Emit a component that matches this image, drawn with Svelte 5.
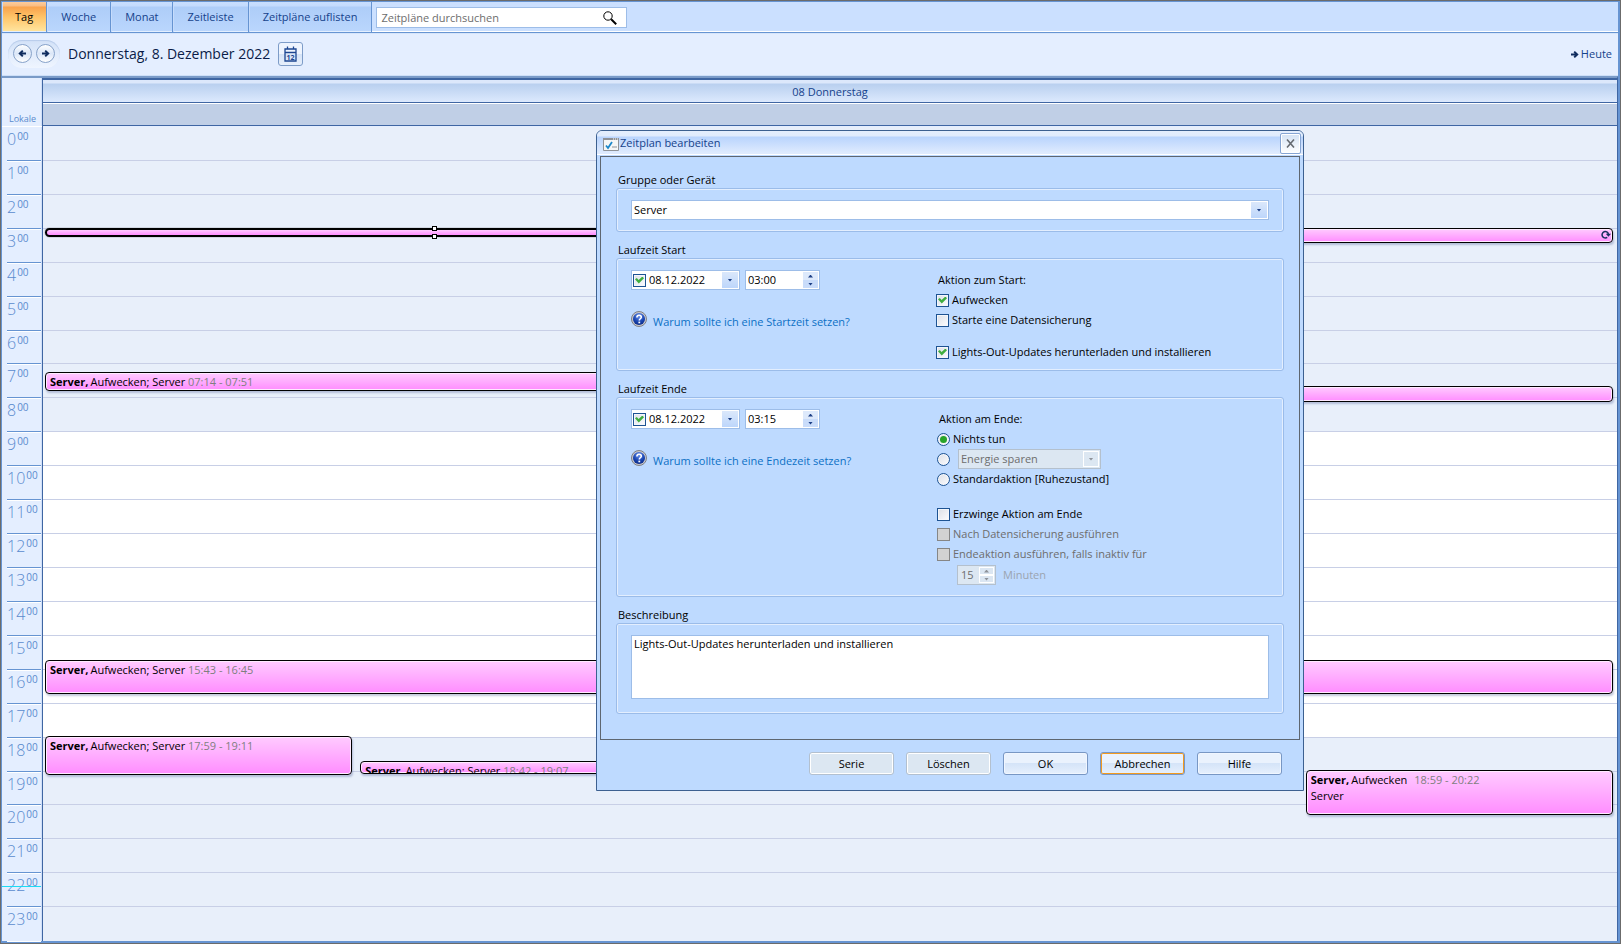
<script lang="ts">
	type CalendarEvent = {
		start: number;
		end: number;
		column: number;
		columns: number;
		title?: string;
		time?: string;
		detail?: string;
		selected?: boolean;
		recurring?: boolean;
	};

	const tabs = ['Tag', 'Woche', 'Monat', 'Zeitleiste', 'Zeitpläne auflisten'];
	const hours = Array.from({ length: 24 }, (_, i) => i);
	const now = 22 * 60 + 22;

	// start and end are minutes since midnight
	const events: CalendarEvent[] = [
		{ start: 178, end: 194, column: 0, columns: 2, selected: true },
		{ start: 179, end: 206, column: 1, columns: 2, recurring: true },
		{ start: 434, end: 467, column: 0, columns: 2, title: 'Aufwecken; Server', time: '07:14 - 07:51' },
		{ start: 459, end: 486, column: 1, columns: 2 },
		{ start: 943, end: 1003, column: 0, columns: 1, title: 'Aufwecken; Server', time: '15:43 - 16:45' },
		{ start: 1078, end: 1147, column: 0, columns: 5, title: 'Aufwecken; Server', time: '17:59 - 19:11' },
		{ start: 1122, end: 1145, column: 1, columns: 5, title: 'Aufwecken; Server', time: '18:42 - 19:07' },
		{ start: 1138, end: 1217, column: 4, columns: 5, title: 'Aufwecken', time: '18:59 - 20:22', detail: 'Server' },
	];

	let activeTab = $state('Tag');
	let search = $state('');
	let device = $state('Server');
	let startEnabled = $state(true);
	let startDate = $state('08.12.2022');
	let startTime = $state('03:00');
	let endEnabled = $state(true);
	let endDate = $state('08.12.2022');
	let endTime = $state('03:15');
	let wakeUp = $state(true);
	let backup = $state(false);
	let updates = $state(true);
	let endAction = $state('none');
	let force = $state(false);
	let description = $state('Lights-Out-Updates herunterladen und installieren');

	function place(event: CalendarEvent) {
		const top = (event.start / 1440) * 100;
		const height = ((event.end - event.start) / 1440) * 100;
		const left = (event.column / event.columns) * 100;
		return `top: ${top}%; height: ${height}%; left: ${left}%; width: ${100 / event.columns}%`;
	}
</script>

{#snippet arrow(flip: boolean)}
	<svg class="arrow" class:flip viewBox="0 0 9 9" aria-hidden="true">
		<path d="M1 4.5h6M4.2 1.6l3 2.9-3 2.9" fill="none" stroke="currentColor" stroke-width="2" />
	</svg>
{/snippet}

{#snippet spinner(disabled: boolean)}
	<span class="spin">
		<button type="button" aria-label="Erhöhen" {disabled}><i class="up"></i></button>
		<button type="button" aria-label="Verringern" {disabled}><i class="down"></i></button>
	</span>
{/snippet}

{#snippet help(text: string)}
	<a class="help" href="#hilfe">
		<svg viewBox="0 0 16 16" aria-hidden="true">
			<defs>
				<radialGradient id="help-fill" cx="50%" cy="25%" r="75%">
					<stop offset="0" stop-color="#6f95ec" />
					<stop offset="0.6" stop-color="#1c48b5" />
					<stop offset="1" stop-color="#0a2a86" />
				</radialGradient>
			</defs>
			<circle cx="8" cy="8" r="7.5" fill="#c9c9cc" stroke="#7d7f87" />
			<circle cx="8" cy="8" r="6" fill="url(#help-fill)" />
			<path d="M5.9 6.4c0-1.3.9-2.1 2.2-2.1s2.2.7 2.2 1.9c0 1.5-2 1.6-2 3.2" fill="none" stroke="#fff" stroke-width="1.6" />
			<path d="M7.4 10.6h1.8v1.7h-1.8z" fill="#fff" />
		</svg>
		<span>{text}</span>
	</a>
{/snippet}

<div class="app">
	<div class="frame">
		<nav class="tabs">
			{#each tabs as tab}
				<button type="button" class="tab" class:active={tab === activeTab} onclick={() => (activeTab = tab)}>{tab}</button>
			{/each}
			<label class="search">
				<input type="text" placeholder="Zeitpläne durchsuchen" aria-label="Zeitpläne durchsuchen" bind:value={search} />
				<svg viewBox="0 0 14 14" aria-hidden="true">
					<circle cx="5" cy="5" r="4.2" fill="none" stroke="#000" />
					<path d="M8.2 8.2l5 5" stroke="#000" stroke-width="2" />
				</svg>
			</label>
		</nav>

		<header class="toolbar">
			<div class="pager">
				<button type="button" aria-label="Zurück">{@render arrow(true)}</button>
				<button type="button" aria-label="Weiter">{@render arrow(false)}</button>
			</div>
			<h1>Donnerstag, 8. Dezember 2022</h1>
			<button type="button" class="pick" aria-label="Datum wählen">
				<svg viewBox="0 0 13 16" aria-hidden="true">
					<path d="M1 3h11v12H1zM1 6.5h11M3.5 0.5v3M9.5 0.5v3" fill="none" stroke="#1c4691" stroke-width="1.3" />
					<text x="6.5" y="13.5" text-anchor="middle">12</text>
				</svg>
			</button>
			<a class="today" href="#heute">{@render arrow(false)}Heute</a>
		</header>

		<main class="calendar">
			<div class="ruler">
				<div class="zone">Lokale</div>
				<div class="hours">
					{#each hours as hour}
						<div class="hour"><span>{hour}</span><sup>00</sup></div>
					{/each}
					<div class="now" style="top: {(now / 1440) * 100}%"></div>
				</div>
			</div>
			<div class="day">
				<div class="day-name">08 Donnerstag</div>
				<div class="all-day"></div>
				<div class="slots">
					{#each hours as hour}
						<div class="slot" class:working={hour >= 9 && hour < 18}></div>
					{/each}
					<div class="events">
						{#each events as event}
							<div class="place" style={place(event)}>
								<article class="event" class:selected={event.selected}>
									{#if event.title}
										<div class="text">
											<b>Server,</b>{event.title} <time class:spaced={event.detail}>{event.time}</time>
											{#if event.detail}<br />{event.detail}{/if}
										</div>
									{/if}
									{#if event.recurring}
										<svg class="recur" viewBox="0 0 10 9" aria-hidden="true">
											<path d="M6.2 7.3A3.2 3.2 0 1 1 7.4 4" fill="none" stroke="#17305f" stroke-width="1.5" />
											<path d="M4.8 3.8H10L7.4 6.8z" fill="#17305f" />
										</svg>
									{/if}
								</article>
								{#if event.selected}
									<i class="handle top"></i>
									<i class="handle bottom"></i>
								{/if}
							</div>
						{/each}
					</div>
				</div>
			</div>
		</main>
	</div>

	<form class="dialog" aria-label="Zeitplan bearbeiten" onsubmit={(e) => e.preventDefault()}>
		<div class="titlebar">
			<svg viewBox="0 0 16 13" aria-hidden="true">
				<path d="M.5.5h15v12H.5z" fill="#f6f6f6" stroke="#8f9296" />
				<path d="M0 0h16v2H0z" fill="#8f9296" />
				<path d="M10 .5h1v1h-1zM12 .5h1v1h-1zM14 .5h1v1h-1z" fill="#fff" />
				<path d="M3 7.5l2 2.5L9 4" fill="none" stroke="#1d87c9" stroke-width="1.8" />
				<path d="M9 9h5" stroke="#8f9296" />
			</svg>
			<h2>Zeitplan bearbeiten</h2>
			<button type="button" class="close" aria-label="Schließen">
				<svg viewBox="0 0 9 9" aria-hidden="true"><path d="M1 .5l7 8M8 .5l-7 8" stroke="#666b72" stroke-width="1.6" /></svg>
			</button>
		</div>

		<div class="panel">
			<fieldset>
				<legend>Gruppe oder Gerät</legend>
				<div class="box">
					<div class="combo wide">
						<select aria-label="Gruppe oder Gerät" bind:value={device}>
							<option>Server</option>
						</select>
						<span class="drop"><i class="down"></i></span>
					</div>
				</div>
			</fieldset>

			<fieldset>
				<legend>Laufzeit Start</legend>
				<div class="box split start">
					<div>
						<div class="row">
							<div class="field date">
								<input type="checkbox" aria-label="Startzeit aktiv" bind:checked={startEnabled} />
								<input type="text" aria-label="Startdatum" bind:value={startDate} />
								<button type="button" class="drop" aria-label="Kalender öffnen"><i class="down"></i></button>
							</div>
							<div class="field time">
								<input type="text" aria-label="Startzeit" bind:value={startTime} />
								{@render spinner(false)}
							</div>
						</div>
						{@render help('Warum sollte ich eine Startzeit setzen?')}
					</div>
					<div>
						<p>Aktion zum Start:</p>
						<label><input type="checkbox" bind:checked={wakeUp} />Aufwecken</label>
						<label><input type="checkbox" bind:checked={backup} />Starte eine Datensicherung</label>
						<label class="updates"><input type="checkbox" bind:checked={updates} />Lights-Out-Updates herunterladen und installieren</label>
					</div>
				</div>
			</fieldset>

			<fieldset>
				<legend>Laufzeit Ende</legend>
				<div class="box split end">
					<div>
						<div class="row">
							<div class="field date">
								<input type="checkbox" aria-label="Endezeit aktiv" bind:checked={endEnabled} />
								<input type="text" aria-label="Enddatum" bind:value={endDate} />
								<button type="button" class="drop" aria-label="Kalender öffnen"><i class="down"></i></button>
							</div>
							<div class="field time">
								<input type="text" aria-label="Endezeit" bind:value={endTime} />
								{@render spinner(false)}
							</div>
						</div>
						{@render help('Warum sollte ich eine Endezeit setzen?')}
					</div>
					<div>
						<p>Aktion am Ende:</p>
						<label><input type="radio" name="end" value="none" bind:group={endAction} />Nichts tun</label>
						<div class="option">
							<input type="radio" name="end" value="power" aria-label="Energie sparen" bind:group={endAction} />
							<div class="combo">
								<select aria-label="Energieaktion" disabled>
									<option>Energie sparen</option>
								</select>
								<span class="drop"><i class="down"></i></span>
							</div>
						</div>
						<label><input type="radio" name="end" value="default" bind:group={endAction} />Standardaktion [Ruhezustand]</label>
						<label class="force"><input type="checkbox" bind:checked={force} />Erzwinge Aktion am Ende</label>
						<label class="muted"><input type="checkbox" disabled />Nach Datensicherung ausführen</label>
						<label class="muted"><input type="checkbox" disabled />Endeaktion ausführen, falls inaktiv für</label>
						<label class="minutes">
							<span class="field off">
								<input type="text" value="15" disabled />
								{@render spinner(true)}
							</span>
							Minuten
						</label>
					</div>
				</div>
			</fieldset>

			<fieldset>
				<legend>Beschreibung</legend>
				<div class="box note">
					<textarea aria-label="Beschreibung" bind:value={description}></textarea>
				</div>
			</fieldset>
		</div>

		<footer>
			<button type="button" class="flat">Serie</button>
			<button type="button" class="flat">Löschen</button>
			<button type="submit">OK</button>
			<button type="button" class="focus">Abbrechen</button>
			<button type="button">Hilfe</button>
		</footer>
	</form>
</div>

<style>
	:global(body) {
		margin: 0;
	}

	.app,
	.app * {
		box-sizing: border-box;
	}

	.app {
		position: relative;

		display: flex;
		min-height: 100vh;

		border: 1px solid #6b6b6b;

		font: 11px/16px "Open Sans", "Noto Sans", sans-serif;
		color: #000;
	}

	.frame {
		flex: 1;
		display: flex;
		flex-direction: column;

		border: 1px solid #6694d2;
		border-width: 1px 2px 2px 1px;
		background: #e4eeff;
	}

	button,
	input,
	select,
	textarea {
		margin: 0;
		padding: 0;
		border: 0;
		border-radius: 0;
		outline: none;
		background: none;

		color: inherit;
		font: inherit;
	}

	svg {
		display: block;
		flex: none;
	}

	h1,
	h2,
	p {
		margin: 0;
		font-weight: 400;
	}

	h2 {
		font-size: 11px;
	}

	/* tabs */
	.tabs {
		display: flex;
		height: 31px;

		border-bottom: 1px solid #6694d2;
		background: #cbe0ff;
		box-shadow: inset 0 -1px #fff;
	}

	.tab {
		padding: 0 14px 1px;

		border-right: 1px solid #6694d2;
		background: linear-gradient(#c8defe 0, #c4dbfd 4px, #aecdf8 5px, #bad6fd 29px);
		box-shadow: inset 1px 0 #c6dcfc, inset 0 -1px #e3efff;

		color: #15428b;
	}

	.tab.active {
		padding: 0 13px 1px;

		background: linear-gradient(#fbcb9c 0, #f9bd83 4px, #f8a24c 5px, #ffc468 15px, #ffe29a 28px);
		color: #000;
	}

	.search {
		display: flex;
		align-items: center;
		width: 251px;
		margin: 5px 4px 4px;
		padding: 0 9px 0 4px;

		border: 1px solid #9dbde8;
		background: #fff;
	}

	.search input {
		flex: 1;
		min-width: 0;
	}

	.search input::placeholder {
		color: #6d6d6d;
		opacity: 1;
	}

	.search svg {
		width: 14px;
		height: 14px;
	}

	/* date bar */
	.toolbar {
		display: flex;
		align-items: center;
		height: 43px;
		padding: 0 6px 2px;

		border-top: 1px solid #d6e5fb;
		box-shadow: inset 0 -1px #cddff8;
	}

	.pager {
		display: flex;
		gap: 4px;
		padding: 4px 5px 5px;

		border-radius: 14px;
		background: linear-gradient(#d3e2f8, #eff5ff);
		box-shadow: inset 0 1px 1px #b7cbea;
	}

	.pager button {
		display: grid;
		place-items: center;
		width: 19px;
		height: 19px;

		border: 1px solid #87a2c9;
		border-radius: 50%;
		background: linear-gradient(#fff, #dbe7f8 50%, #fff);
	}

	.arrow {
		width: 9px;
		height: 9px;
		color: #0f2c5e;
	}

	.arrow.flip {
		transform: scaleX(-1);
	}

	h1 {
		margin: 0 8px;

		color: #0a1c48;
		font-size: 14px;
	}

	.pick {
		display: grid;
		place-items: center;
		width: 25px;
		height: 24px;

		border: 1px solid #7d9cc8;
		border-radius: 3px;
		background: linear-gradient(#eef4fe 50%, #d5e3f7 50%, #e6effc);
	}

	.pick svg {
		width: 13px;
		height: 16px;
	}

	.pick text {
		fill: #1c4691;
		font-size: 7px;
		font-weight: 700;
	}

	.today {
		display: flex;
		align-items: center;
		gap: 2px;
		margin-left: auto;

		color: #15428b;
		text-decoration: none;
	}

	/* calendar */
	.calendar {
		flex: 1;
		display: flex;

		border-top: 2px solid #7a9bc8;
		border-right: 1px solid #3f66a3;
	}

	.ruler {
		display: flex;
		flex-direction: column;
		width: 41px;

		border-right: 1px solid #3f66a3;
		box-shadow: inset -1px 0 #d0e0f9;

		color: #5a8bce;
	}

	.zone {
		height: 49px;
		padding: 33px 7px 0;

		border-bottom: 1px solid #fff;

		font-size: 9px;
		line-height: 15px;
	}

	.hours,
	.slots {
		position: relative;

		flex: 1;
		display: flex;
		flex-direction: column;
	}

	.slots {
		margin-top: 1px;
	}

	.hour {
		flex: 1;
		display: flex;
		margin: 0 1px 0 5px;

		border-bottom: 1px solid #6694d2;
		box-shadow: 0 1px #fff;

		font-size: 16px;
		font-weight: 300;
		line-height: 24px;
	}

	.hour:nth-child(24) {
		border-color: transparent;
	}

	.hour sup {
		margin-left: 1px;

		font-size: 10px;
		font-weight: 400;
		line-height: 18px;
		vertical-align: baseline;
	}

	.now {
		position: absolute;
		left: 0;
		right: 1px;

		height: 1px;
		background: #1bdcf5;
	}

	.day {
		flex: 1;
		display: flex;
		flex-direction: column;

		border-top: 2px solid #3f66a3;
	}

	.day-name {
		height: 23px;

		border-bottom: 1px solid #3f66a3;
		background: linear-gradient(#dce8fb 0, #dce8fb 3px, #b9d0ef 4px, #dce9fd 22px);

		color: #15428b;
		line-height: 23px;
		text-align: center;
	}

	.all-day {
		height: 23px;

		border-top: 1px solid #fff;
		border-bottom: 1px solid #3f66a3;
		background: #c0cfe6;
	}

	.slot {
		flex: 1;

		border-bottom: 1px solid #c8cfe6;
		background: #e8effa;
	}

	.slot.working {
		background: #fff;
	}

	.slot:nth-child(24) {
		border-color: transparent;
	}

	.events {
		position: absolute;
		inset: 0 -2px 0 0;
	}

	.place {
		position: absolute;
		padding: 0 6px 0 2px;
	}

	.event {
		height: 100%;
		overflow: hidden;
		padding: 1px 1px 0 4px;

		border: 1px solid #000;
		border-radius: 4px;
		background: linear-gradient(#ffcbff, #ff8dff);
		box-shadow: inset 0 0 0 1px #ffeaff, 1px 2px 2px rgba(60, 80, 140, .3);
	}

	.event.selected {
		border: 2px solid #000;
		border-radius: 5px;
		box-shadow: 0 0 1px #000;
	}

	.text {
		overflow: hidden;
		max-height: 100%;
	}

	.text b {
		margin-right: 2px;
	}

	.event time {
		color: #7f7f7f;
	}

	.event time.spaced {
		margin-left: 4px;
	}

	.recur {
		width: 10px;
		height: 9px;
		margin-left: auto;
	}

	.handle {
		position: absolute;
		left: calc(50% - 5px);

		width: 5px;
		height: 5px;

		border: 1px solid #000;
		background: #fff;
	}

	.handle.top {
		top: -2px;
	}

	.handle.bottom {
		bottom: -2px;
	}

	/* dialog */
	.dialog {
		position: absolute;
		top: 129px;
		left: 595px;

		width: 708px;

		border: 1px solid #3c6090;
		border-radius: 6px 6px 0 0;
		background: #bedaff;
	}

	.titlebar {
		display: flex;
		align-items: center;
		height: 24px;
		padding: 0 2px 0 6px;

		border-radius: 5px 5px 0 0;
		background: linear-gradient(#e4eefd 0, #e0ecfd 5px, #b9d4fd 6px, #dfebfe 22px);
		box-shadow: inset 0 -1px #fff;

		color: #15428b;
	}

	.titlebar svg {
		width: 16px;
		height: 13px;
		margin: 3px 1px 0 0;
	}

	.close {
		display: grid;
		place-items: center;
		width: 21px;
		height: 21px;
		margin-left: auto;

		border: 1px solid #86a5d3;
		border-radius: 2px;
		background: linear-gradient(#d3e2f4, #fff);
		box-shadow: inset 0 0 0 1px #fff;
	}

	.close svg {
		width: 9px;
		height: 9px;
		margin: 0;
	}

	.panel {
		display: flex;
		flex-direction: column;
		gap: 10px;
		margin: 1px 3px 0;
		padding: 15px 15px 25px;

		border: 1px solid #5e6670;
	}

	fieldset {
		min-width: 0;
		margin: 0;
		padding: 0;
		border: 0;
	}

	legend {
		padding: 0 2px;
	}

	.box {
		padding: 11px 14px;

		border: 1px solid #9bbce9;
		border-radius: 3px;
		box-shadow: inset 0 0 0 1px #e3eefe;
	}

	.split {
		display: grid;
		grid-template-columns: 305px 1fr;
	}

	.start {
		padding-bottom: 8px;
	}

	.end {
		grid-template-columns: 306px 1fr;
	}

	.note {
		padding-bottom: 14px;
	}

	.row {
		display: flex;
		gap: 5px;
	}

	.field {
		display: flex;
		align-items: center;
		height: 20px;
		padding: 1px;

		border: 1px solid #9dbde8;
		background: #fff;
	}

	.field input[type="text"] {
		flex: 1;
		min-width: 0;
	}

	.date {
		width: 109px;
	}

	.time {
		width: 75px;
	}

	.date input[type="text"] {
		padding-left: 3px;
	}

	.time input[type="text"] {
		padding-left: 1px;
	}

	.drop {
		display: grid;
		place-items: center;
		width: 16px;
		height: 16px;

		background: linear-gradient(#dbe8fb, #bdd6fb);
	}

	.down,
	.up {
		width: 5px;
		height: 3px;

		background: #1c3f86;
		clip-path: polygon(0 0, 100% 0, 50% 100%);
	}

	.up {
		clip-path: polygon(50% 0, 100% 100%, 0 100%);
	}

	.spin {
		display: flex;
		flex-direction: column;
		width: 15px;
		height: 16px;
	}

	.spin button {
		flex: 1;
		display: grid;
		place-items: center;

		background: #dde9fb;
	}

	.spin button + button {
		background: #c9dcfa;
	}

	.spin button:disabled {
		border: 1px solid #fff;
		background: #dbe6f2;
	}

	.combo {
		position: relative;

		width: 143px;
	}

	.combo.wide {
		width: 100%;
	}

	.combo select {
		appearance: none;

		display: block;
		width: 100%;
		height: 20px;
		padding: 0 20px 0 2px;

		border: 1px solid #9dbde8;
		background: #fff;
	}

	.combo .drop {
		position: absolute;
		top: 2px;
		right: 2px;

		pointer-events: none;
	}

	.combo select:disabled {
		border-color: #b4c0cd;
		background: #dce7f2;

		color: #6d6d6d;
		opacity: 1;
	}

	.combo select:disabled + .drop {
		border: 1px solid #fff;
		background: #dce7f2;
	}

	.combo select:disabled + .drop i,
	.spin button:disabled i {
		background: #8d9299;
	}

	.help {
		display: flex;
		gap: 6px;
		margin-top: 21px;

		color: #0b70c5;
		text-decoration: none;
	}

	.help svg {
		width: 16px;
		height: 16px;
	}

	.help span {
		padding-top: 3px;
	}

	.split p {
		padding-left: 2px;
		line-height: 20px;
	}

	.split label,
	.option {
		display: flex;
		align-items: center;
		gap: 3px;
		height: 20px;
	}

	.split label.updates {
		margin-top: 12px;
	}

	.split label.force {
		margin-top: 15px;
	}

	.option {
		gap: 8px;
	}

	input[type="checkbox"],
	input[type="radio"] {
		appearance: none;

		flex: none;
		display: grid;
		place-items: center;
		width: 13px;
		height: 13px;

		border: 1px solid #1d5393;
		background: linear-gradient(135deg, #dcdfe6, #fbfcff);
		box-shadow: inset 0 0 0 1px #f4f6fa;
	}

	input[type="radio"] {
		border-radius: 50%;
	}

	input[type="checkbox"]:checked::after {
		content: '';

		width: 9px;
		height: 7px;

		background: #3fae3f;
		clip-path: polygon(0 40%, 20% 20%, 40% 50%, 82% 0, 100% 25%, 42% 100%);
	}

	input[type="radio"]:checked::after {
		content: '';

		width: 7px;
		height: 7px;

		border-radius: 50%;
		background: #28a428;
	}

	input[type="checkbox"]:disabled {
		border-color: #868686;
		background: #d2d2d2;
		box-shadow: none;
	}

	.muted {
		color: #6d6d6d;
	}

	.split label.minutes {
		gap: 7px;
		margin-top: 1px;
		padding-left: 20px;

		color: #9ba4b0;
	}

	.field.off {
		width: 39px;
		padding-left: 3px;

		border-color: #b4c0cd;
		background: #dce7f2;

		color: #6d6d6d;
	}

	textarea {
		display: block;
		width: 100%;
		height: 64px;
		padding: 0 2px;
		resize: none;

		border: 1px solid #9dbde8;
		background: #fff;
	}

	footer {
		display: flex;
		justify-content: flex-end;
		gap: 12px;
		padding: 12px 21px 15px;
	}

	footer button {
		width: 85px;
		height: 23px;

		border: 1px solid #7897c4;
		border-radius: 3px;
		background: linear-gradient(#eaf2fd 50%, #d5e4f8 50%, #e6f0fd);
		box-shadow: inset 0 0 0 1px #f0f6ff;
	}

	footer .flat {
		border-color: #b3c0cf;
		background: #dce7f2;
		box-shadow: inset 0 0 0 1px #fff;
	}

	footer .focus {
		box-shadow: inset 0 0 0 1px #f29a1f;
	}
</style>
